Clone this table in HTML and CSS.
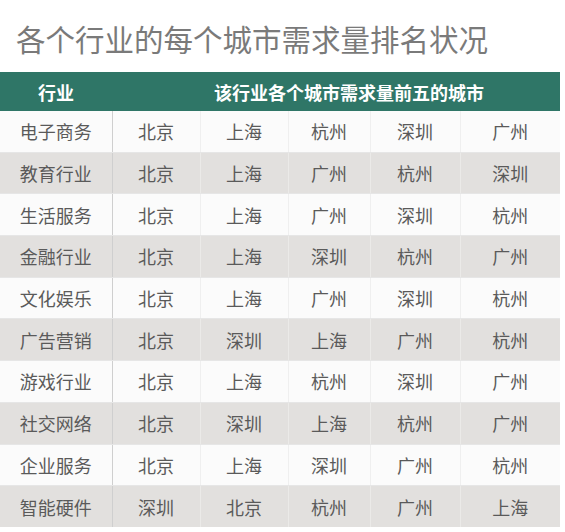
FILE: index.html
```html
<!DOCTYPE html>
<html lang="zh">
<head>
<meta charset="utf-8">
<link rel="stylesheet" href="styles.css">
</head>
<body>
<div class="page">
  <h1 class="title">各个行业的每个城市需求量排名状况</h1>
  <table class="rank">
    <colgroup>
      <col class="c-ind"><col class="c1"><col class="c2"><col class="c3"><col class="c4"><col class="c5">
    </colgroup>
    <thead>
      <tr><th class="h-ind">行业</th><th class="h-cities" colspan="5">该行业各个城市需求量前五的城市</th></tr>
    </thead>
    <tbody>
      <tr><td class="ind">电子商务</td><td>北京</td><td>上海</td><td>杭州</td><td>深圳</td><td>广州</td></tr>
      <tr class="alt"><td class="ind">教育行业</td><td>北京</td><td>上海</td><td>广州</td><td>杭州</td><td>深圳</td></tr>
      <tr><td class="ind">生活服务</td><td>北京</td><td>上海</td><td>广州</td><td>深圳</td><td>杭州</td></tr>
      <tr class="alt"><td class="ind">金融行业</td><td>北京</td><td>上海</td><td>深圳</td><td>杭州</td><td>广州</td></tr>
      <tr><td class="ind">文化娱乐</td><td>北京</td><td>上海</td><td>广州</td><td>深圳</td><td>杭州</td></tr>
      <tr class="alt"><td class="ind">广告营销</td><td>北京</td><td>深圳</td><td>上海</td><td>广州</td><td>杭州</td></tr>
      <tr><td class="ind">游戏行业</td><td>北京</td><td>上海</td><td>杭州</td><td>深圳</td><td>广州</td></tr>
      <tr class="alt"><td class="ind">社交网络</td><td>北京</td><td>深圳</td><td>上海</td><td>杭州</td><td>广州</td></tr>
      <tr><td class="ind">企业服务</td><td>北京</td><td>上海</td><td>深圳</td><td>广州</td><td>杭州</td></tr>
      <tr class="alt"><td class="ind">智能硬件</td><td>深圳</td><td>北京</td><td>杭州</td><td>广州</td><td>上海</td></tr>
    </tbody>
  </table>
</div>
</body>
</html>
```

FILE: styles.css
```css
html, body {
  margin: 0;
  padding: 0;
  background: #ffffff;
}
.page {
  width: 565px;
  height: 532px;
  overflow: hidden;
  font-family: "Noto Sans CJK SC", "Noto Sans", sans-serif;
}
.title {
  margin: 0;
  padding: 20px 0 0 16px;
  height: 52px;
  box-sizing: border-box;
  font-size: 29.5px;
  line-height: 36px;
  font-weight: 400;
  color: #7a7a7a;
  letter-spacing: 0;
}
.rank {
  border-collapse: collapse;
  table-layout: fixed;
  width: 560px;
  margin-top: 20px;
}
.c-ind { width: 112px; }
.c1 { width: 88px; }
.c2 { width: 88px; }
.c3 { width: 82px; }
.c4 { width: 90px; }
.c5 { width: 100px; }
.rank th {
  background: #2f7667;
  color: #ffffff;
  font-weight: 700;
  font-size: 18px;
  height: 39px;
  padding: 0;
  text-align: center;
}
.rank .h-cities {
  padding-left: 26px;
}
.rank td {
  height: 40.7px;
  padding: 0;
  text-align: center;
  font-size: 18px;
  color: #5a5a5a;
  background: #fbfbfb;
  border-left: 1px solid #efefef;
  border-bottom: 1px solid #e6e6e6;
}
.rank tr.alt td {
  background: #e2e0de;
  border-left: 1px solid #ebeae8;
}
.rank td.ind,
.rank tr.alt td.ind {
  border-left: none;
  border-right: 1px solid #cfcfcf;
  padding-left: 0;
}
.rank tbody tr:last-child td {
  border-bottom: none;
}
```
